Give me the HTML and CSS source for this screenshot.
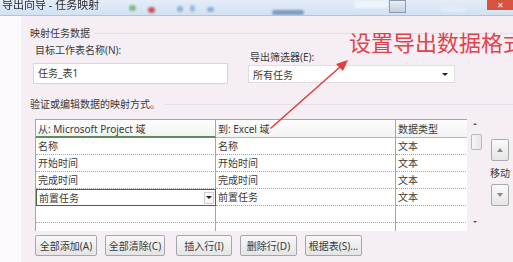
FILE: index.html
```html
<!DOCTYPE html>
<html lang="zh-CN">
<head>
<meta charset="utf-8">
<title>导出向导 - 任务映射</title>
<link rel="stylesheet" href="styles.css">
</head>
<body>
<div class="titlebar">
  <span class="title">导出向导 - 任务映射</span>
  <i class="blob g"></i>
  <i class="blob r"></i>
  <i class="blob b1"></i>
  <i class="blob b2"></i>
  <i class="blob b3"></i>
  <i class="blob dk"></i>
  <i class="blob lt"></i>
  <i class="tbicon"></i>
  <i class="blob lt2"></i>
  <span class="close">✕</span>
</div>
<div class="body">
  <div class="strip"></div>
  <div class="dialog">
    <div class="section-head"><span>映射任务数据</span><i class="rule"></i></div>
    <div class="fields">
      <div class="field f1">
        <label class="lbl">目标工作表名称(N):</label>
        <div class="input">任务_表1</div>
      </div>
      <div class="field f2">
        <label class="lbl">导出筛选器(E):</label>
        <div class="select"><span>所有任务</span><span class="tri"></span></div>
      </div>
    </div>
    <div class="section-head s2"><span>验证或编辑数据的映射方式。</span><i class="rule"></i></div>
    <div class="grid-area">
      <div class="table">
        <div class="cell hd hd-sel">从: Microsoft Project 域</div>
        <div class="cell hd">到: Excel 域</div>
        <div class="cell hd">数据类型</div>

        <div class="cell">名称</div>
        <div class="cell">名称</div>
        <div class="cell">文本</div>

        <div class="cell">开始时间</div>
        <div class="cell">开始时间</div>
        <div class="cell">文本</div>

        <div class="cell">完成时间</div>
        <div class="cell">完成时间</div>
        <div class="cell">文本</div>

        <div class="cell active"><span>前置任务</span><span class="ddbtn"><span class="tri"></span></span></div>
        <div class="cell">前置任务</div>
        <div class="cell">文本</div>

        <div class="cell"></div>
        <div class="cell"></div>
        <div class="cell"></div>

        <div class="cell"></div>
        <div class="cell"></div>
        <div class="cell"></div>
      </div>
      <div class="vscroll">
        <span class="sarrow up"></span>
        <span class="thumb"></span>
        <span class="sarrow down"></span>
      </div>
      <div class="move">
        <div class="mbtn"><span class="mtri up"></span></div>
        <div class="mlabel">移动</div>
        <div class="mbtn"><span class="mtri down"></span></div>
      </div>
    </div>
    <div class="buttons">
      <button class="btn w62">全部添加(A)</button>
      <button class="btn w60">全部清除(C)</button>
      <button class="btn w56 sp">插入行(I)</button>
      <button class="btn w57">删除行(D)</button>
      <button class="btn w57">根据表(S)...</button>
    </div>
  </div>
</div>
<div class="annot">设置导出数据格式</div>
<svg class="arrow" width="513" height="262" viewBox="0 0 513 262">
  <line x1="271" y1="128" x2="340" y2="67" stroke="#e0403f" stroke-width="1.6" stroke-linecap="round"/>
  <polygon points="348,60 336,64 343,71" fill="#e0403f"/>
</svg>
</body>
</html>
```

FILE: styles.css
```css
* { box-sizing: border-box; }

body {
  margin: 0;
  width: 513px;
  height: 262px;
  overflow: hidden;
  position: relative;
  font-family: "Noto Sans", "Noto Sans CJK SC", sans-serif;
  font-size: 10px;
  color: #3a3a3a;
  background: #f5eff5;
}

/* title bar */
.titlebar {
  height: 16px;
  display: flex;
  align-items: flex-start;
  background: linear-gradient(#e4edf8, #d2e1f2);
  border-bottom: 1px solid #b3c3d8;
  overflow: hidden;
}
.title {
  font-size: 11px;
  line-height: 11px;
  margin: -1px 0 0 2px;
  color: #2c2c2c;
  white-space: nowrap;
  filter: blur(0.3px);
}
.blob {
  display: block;
  border-radius: 50%;
  filter: blur(1.2px);
  flex: none;
}
.blob.g { width: 7px; height: 6px; background: #7dbb7d; margin: 5px 0 0 30px; }
.blob.r { width: 7px; height: 6px; background: #c8505a; margin: 7px 0 0 12px; }
.blob.b1 { width: 6px; height: 6px; background: #8fb0d8; margin: 6px 0 0 22px; }
.blob.b2 { width: 5px; height: 7px; background: #99b6da; margin: 5px 0 0 7px; }
.blob.b3 { width: 7px; height: 5px; background: #8aaad2; margin: 7px 0 0 12px; }
.blob.dk { width: 32px; height: 5px; border-radius: 3px; background: #7d9cc4; margin: 10px 0 0 58px; }
.blob.lt { width: 34px; height: 7px; border-radius: 3px; background: #eef4fb; margin: 1px 0 0 50px; }
.tbicon {
  display: block;
  width: 17px;
  height: 13px;
  margin: 0 0 0 1px;
  border: 1px solid #8c9cb0;
  background: linear-gradient(#e8eef6, #c4d0de);
}
.blob.lt2 { width: 26px; height: 7px; border-radius: 3px; background: #e2ebf6; margin: 5px 0 0 34px; }
.close {
  margin-left: auto;
  width: 26px;
  height: 10px;
  background: #d8533f;
  color: #fff;
  font-size: 8px;
  line-height: 9px;
  text-align: center;
}

/* body */
.body {
  display: flex;
  height: 246px;
}
.strip {
  width: 21px;
  flex: none;
  background: #fbf9fb;
}
.dialog {
  flex: 1;
  padding-left: 9px;
  display: flex;
  flex-direction: column;
}

.section-head {
  display: flex;
  align-items: center;
  margin-top: 11px;
  line-height: 12px;
  white-space: nowrap;
}
.section-head .rule {
  flex: 1;
  height: 1px;
  margin: 0 0 0 4px;
  background: #e6dee6;
}
.section-head.s2 { margin-top: 14px; }

.fields {
  display: flex;
  gap: 20px;
  margin-left: 3px;
}
.field { display: flex; flex-direction: column; }
.lbl { line-height: 12px; padding-left: 2px; white-space: nowrap; }
.f1 { width: 195px; }
.f1 .lbl { margin-top: 5px; }
.f1 .input { margin-top: 7px; }
.f2 { width: 207px; }
.f2 .lbl { margin-top: 12px; }
.f2 .select { margin-top: 2px; }

.input {
  height: 21px;
  background: #fff;
  border: 1px solid #dcd6dc;
  padding-left: 4px;
  line-height: 19px;
}
.select {
  height: 18px;
  background: #fff;
  border: 1px solid #e2dce2;
  padding: 0 6px 0 4px;
  display: flex;
  align-items: center;
  justify-content: space-between;
}
.tri {
  width: 0;
  height: 0;
  border-left: 3px solid transparent;
  border-right: 3px solid transparent;
  border-top: 3px solid #222;
}

/* grid */
.grid-area {
  display: flex;
  margin: 9px 0 0 5px;
}
.table {
  width: 432px;
  height: 112px;
  overflow: hidden;
  display: grid;
  grid-template-columns: 180px 180px 72px;
  grid-auto-rows: 17px;
  grid-template-rows: 18px;
  border-top: 1px solid #a8a4a8;
  border-left: 1px solid #a8a4a8;
  background: #fff;
  align-content: start;
}
.cell {
  border-right: 1px solid #a8a4a8;
  border-bottom: 1px dotted #a6a6a6;
  padding: 0 2px;
  line-height: 16px;
  white-space: nowrap;
  overflow: hidden;
  background: #fff;
}
.cell:nth-child(3n) { border-right: 1px solid #a8a4a8; }
.hd {
  background: linear-gradient(#fdfdfd, #f3f3f3);
  border-bottom: 1px solid #b5b5b5;
  line-height: 17px;
  padding-top: 1px;
}
.hd-sel { border-bottom: 2px solid #5d8c5a; line-height: 16px; }
.cell.active {
  border: 1px solid #3f6b3e;
  display: flex;
  align-items: center;
  justify-content: space-between;
  padding-right: 1px;
}
.ddbtn {
  width: 10px;
  height: 12px;
  background: #f7f7f7;
  border: 1px solid #cfcfcf;
  display: flex;
  align-items: center;
  justify-content: center;
}

.vscroll {
  width: 16px;
  height: 112px;
  display: flex;
  flex-direction: column;
  align-items: center;
  padding-top: 4px;
}
.sarrow {
  width: 0;
  height: 0;
  border-left: 2px solid transparent;
  border-right: 2px solid transparent;
}
.sarrow.up { border-bottom: 2px solid #555; }
.sarrow.down { border-top: 2px solid #555; margin-top: auto; margin-bottom: 8px; }
.thumb {
  width: 11px;
  height: 16px;
  margin-top: 9px;
  margin-left: 3px;
  background: linear-gradient(90deg, #f6f6f6, #e6e6e6);
  border: 1px solid #b9b9b9;
  border-radius: 2px;
}

.move {
  width: 26px;
  margin-left: 4px;
  display: flex;
  flex-direction: column;
  align-items: center;
  padding-top: 20px;
}
.mbtn {
  width: 18px;
  height: 22px;
  border: 1px solid #a9a9a9;
  border-radius: 2px;
  background: linear-gradient(#f9f9f9, #e6e6e6);
  display: flex;
  align-items: center;
  justify-content: center;
}
.mtri { width: 0; height: 0; border-left: 3px solid transparent; border-right: 3px solid transparent; }
.mtri.up { border-bottom: 4px solid #888; }
.mtri.down { border-top: 4px solid #888; }
.mlabel { margin: 6px 0 4px; line-height: 13px; white-space: nowrap; }

/* buttons */
.buttons {
  display: flex;
  gap: 8px;
  margin: 4px 0 0 5px;
}
.btn {
  height: 21px;
  padding: 0;
  font: inherit;
  color: #3a3a3a;
  border: 1px solid #a9a6a9;
  border-radius: 2px;
  background: linear-gradient(#f8f8f8, #e4e4e4);
  white-space: nowrap;
}
.w62 { width: 62px; }
.w60 { width: 60px; }
.w56 { width: 56px; }
.w57 { width: 57px; }
.sp { margin-left: 3px; }

/* annotation */
.annot {
  position: absolute;
  left: 349px;
  top: 27px;
  font-family: "Noto Sans CJK SC", sans-serif;
  font-size: 22px;
  line-height: 28px;
  color: #e2434a;
  white-space: nowrap;
}
.arrow {
  position: absolute;
  left: 0;
  top: 0;
  pointer-events: none;
}
```
